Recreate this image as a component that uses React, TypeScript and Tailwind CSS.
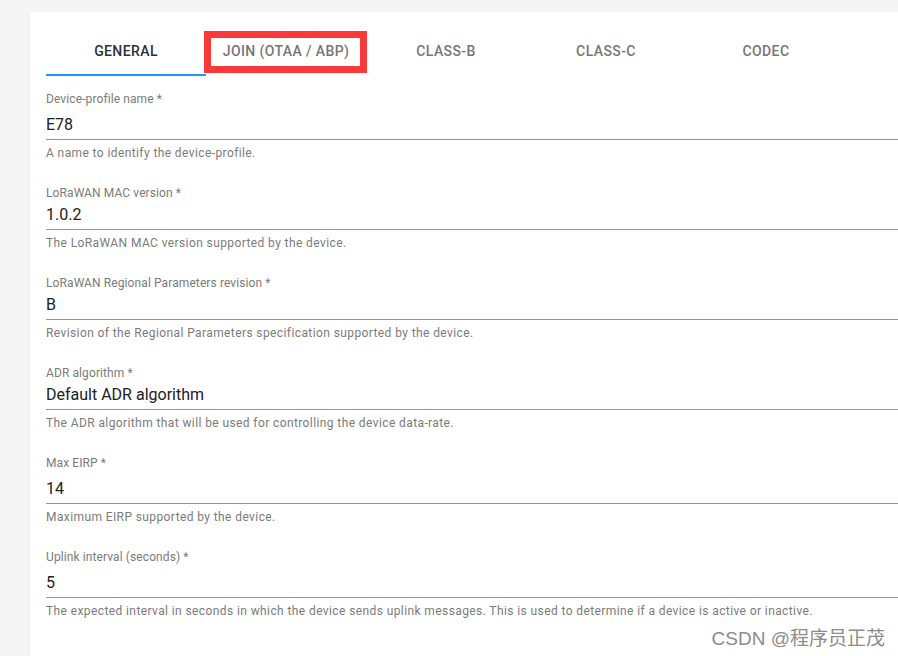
import React from 'react';

interface FieldProps {
  label: string;
  value: string;
  helper: string;
  select?: boolean;
}

const tabs = ['General', 'Join (OTAA / ABP)', 'Class-B', 'Class-C', 'Codec'];

const fields: FieldProps[] = [
  { label: 'Device-profile name', value: 'E78', helper: 'A name to identify the device-profile.' },
  { label: 'LoRaWAN MAC version', value: '1.0.2', helper: 'The LoRaWAN MAC version supported by the device.', select: true },
  {
    label: 'LoRaWAN Regional Parameters revision',
    value: 'B',
    helper: 'Revision of the Regional Parameters specification supported by the device.',
    select: true,
  },
  {
    label: 'ADR algorithm',
    value: 'Default ADR algorithm',
    helper: 'The ADR algorithm that will be used for controlling the device data-rate.',
    select: true,
  },
  { label: 'Max EIRP', value: '14', helper: 'Maximum EIRP supported by the device.' },
  {
    label: 'Uplink interval (seconds)',
    value: '5',
    helper:
      'The expected interval in seconds in which the device sends uplink messages. This is used to determine if a device is active or inactive.',
  },
];

const Field: React.FC<FieldProps> = ({ label, value, helper, select }) => (
  <div className="flex flex-col">
    <label className="text-[12px] leading-[14px] tracking-[0.1px] text-[#7b7b7b]">
      {label} *
    </label>
    <div
      className={`${select ? 'mt-[5px]' : 'mt-[9px]'} border-b border-[#949494] pb-[5px] text-[16px] leading-[19px] text-[#212121]`}
    >
      {value}
    </div>
    <p className="mt-[6px] text-[12px] leading-[14px] tracking-[0.4px] text-[#7b7b7b]">{helper}</p>
  </div>
);

export default function App() {
  return (
    <div className="relative h-[656px] w-[898px] overflow-hidden bg-[#f5f5f5] font-['Roboto',sans-serif]">
      <div className="relative ml-[30px] mt-[12px] w-[900px] rounded-[4px] bg-white p-4 pb-20 shadow-[0_1px_3px_rgba(0,0,0,0.08)]">
        {/* Tabs */}
        <div className="flex">
          {tabs.map((tab, i) => (
            <div
              key={tab}
              className={`flex h-12 w-[160px] items-center justify-center text-[14px] font-medium uppercase tracking-[0.4px] ${
                i === 0 ? 'border-b-2 border-[#2196f3] text-[#2b3138]' : 'pb-[2px] text-[#767676]'
              }`}
            >
              {tab}
            </div>
          ))}
        </div>

        {/* annotation box */}
        <div className="absolute left-[174px] top-[19px] h-[42px] w-[163px] border-[7px] border-[#fa3a3a]" />

        {/* Form */}
        <div className="mt-[16px] flex flex-col gap-[26px]">
          {fields.map((f) => (
            <Field key={f.label} {...f} />
          ))}
        </div>
      </div>

      <div className="absolute right-[13px] top-[628px] font-['Liberation_Sans','Noto_Sans_CJK_SC',sans-serif] text-[19px] leading-[22px] text-[#8c8c8c] [text-shadow:0_0_2px_#fff]">
        CSDN @程序员正茂
      </div>
    </div>
  );
}
